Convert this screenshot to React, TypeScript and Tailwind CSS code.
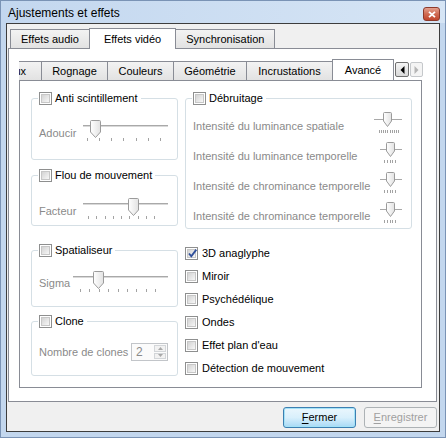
import type { ReactNode } from 'react'

function Check({ checked = false }: { checked?: boolean }) {
  return (
    <span className="relative flex h-[13px] w-[13px] shrink-0 items-center justify-center border border-[#8e8f8f] bg-white">
      <span className="h-[9px] w-[9px] border border-[#c7c7c7] bg-gradient-to-br from-[#d3d3d3] to-[#f7f7f7]" />
      {checked && (
        <svg className="absolute left-[1px] top-0" width="11" height="11" viewBox="0 0 11 11">
          <path d="M2 5.5 L4.3 8.3 L9.3 1.6" fill="none" stroke="#2f4f9a" strokeWidth="1.9" />
        </svg>
      )}
    </span>
  )
}

function Thumb({ w = 11, h = 18 }: { w?: number; h?: number }) {
  return (
    <svg width={w} height={h} viewBox={`0 0 ${w} ${h}`}>
      <defs>
        <linearGradient id="thumbfill" x1="0" y1="0" x2="1" y2="0">
          <stop offset="0" stopColor="#ffffff" />
          <stop offset="1" stopColor="#e2e2e2" />
        </linearGradient>
      </defs>
      <path
        d={`M1.5 0.5 H${w - 1.5} Q${w - 0.5} 0.5 ${w - 0.5} 1.5 V${h - 6} L${w / 2} ${h - 0.5} L0.5 ${h - 6} V1.5 Q0.5 0.5 1.5 0.5 Z`}
        fill="url(#thumbfill)"
        stroke="#9b9b9b"
      />
    </svg>
  )
}

// horizontal slider of the left groups
function Slider({ width, thumb, ticks, tickFrom, tickTo }: { width: number; thumb: number; ticks: number; tickFrom: number; tickTo: number }) {
  return (
    <div className="relative h-[22px] shrink-0" style={{ width }}>
      <div className="absolute left-0 right-0 top-[5px] h-[3px] border-y border-t-[#a9a9a9] border-b-white bg-[#d9d9d9]" />
      <div className="absolute top-0" style={{ left: thumb }}>
        <Thumb />
      </div>
      <div className="absolute top-[18px] flex justify-between" style={{ left: tickFrom, width: tickTo - tickFrom + 1 }}>
        {Array.from({ length: ticks }).map((_, i) => (
          <span key={i} className="h-[3px] w-px bg-[#a3a3a3]" />
        ))}
      </div>
    </div>
  )
}

// tiny slider of the Débruitage rows
function MiniSlider({ wide = false }: { wide?: boolean }) {
  return (
    <div className={`relative h-[21px] shrink-0 ${wide ? 'w-[28px]' : 'w-[22px]'}`}>
      <div className="absolute left-0 right-0 top-[7px] h-[2px] border-t border-[#a9a9a9] bg-white" />
      <div className={`absolute top-0 ${wide ? 'left-[9px]' : 'left-[6px]'}`}>
        <Thumb w={9} h={15} />
      </div>
      <div className={`absolute flex justify-between ${wide ? 'left-[5px] top-[18px] w-[20px]' : 'left-[4px] top-[18px] w-[12px]'}`}>
        {Array.from({ length: wide ? 10 : 5 }).map((_, i) => (
          <span key={i} className="h-[3px] w-px bg-[#a3a3a3]" />
        ))}
      </div>
    </div>
  )
}

function Group({ label, className, children }: { label: string; className: string; children: ReactNode }) {
  return (
    <fieldset className={`rounded-[3px] border border-[#d5dfe5] ${className}`}>
      <legend className="ml-[6px] flex items-center gap-[3px] pl-px pr-[3px] leading-[14px]">
        <Check />
        <span>{label}</span>
      </legend>
      {children}
    </fieldset>
  )
}

function OuterTab({ label, active = false }: { label: string; active?: boolean }) {
  return active ? (
    <div className="relative z-10 -mb-px -ml-px flex h-[21px] items-start border border-b-0 border-[#898c95] bg-white px-[14px] pt-[2px]">
      {label}
    </div>
  ) : (
    <div className="-ml-px flex h-[19px] items-center border border-b-0 border-[#898c95] bg-gradient-to-b from-[#f3f3f3] to-[#e2e2e2] px-[10px] first:ml-0">
      {label}
    </div>
  )
}

function InnerTab({ label, w, active = false }: { label: string; w: string; active?: boolean }) {
  return active ? (
    <div className={`relative z-10 -mb-px -ml-px flex h-[22px] shrink-0 items-start justify-center border border-b-0 border-[#898c95] bg-white pt-[2px] ${w}`}>
      {label}
    </div>
  ) : (
    <div className={`-ml-px flex h-[19px] shrink-0 items-center justify-center border border-b-0 border-[#898c95] bg-gradient-to-b from-[#f3f3f3] to-[#e2e2e2] ${w}`}>
      {label}
    </div>
  )
}

const noiseRows = [
  { text: 'Intensité du luminance spatiale', wide: true },
  { text: 'Intensité du luminance temporelle', wide: false },
  { text: 'Intensité de chrominance temporelle', wide: false },
  { text: 'Intensité de chrominance temporelle', wide: false },
]

const effects = [
  { text: '3D anaglyphe', checked: true },
  { text: 'Miroir' },
  { text: 'Psychédélique' },
  { text: 'Ondes' },
  { text: "Effet plan d'eau" },
  { text: 'Détection de mouvement' },
]

export default function App() {
  return (
    <div className="flex h-[438px] w-[446px] flex-col border border-[#7a93b5] bg-[#c3d7ee] font-['Liberation_Sans',Arial,sans-serif] text-[11px] text-black">
      {/* title bar */}
      <div className="flex h-[22px] shrink-0 items-start justify-between bg-gradient-to-r from-[#c3d7ef] to-[#d6e5f5] pl-[7px] pr-[5px]">
        <span className="pt-[5px] text-[12px] leading-[15px]">Ajustements et effets</span>
        <button
          type="button"
          className="mt-[6px] flex h-[14px] w-[17px] items-center justify-center rounded-[3px] border border-[#8d3a2b] bg-gradient-to-b from-[#e3a08e] via-[#cf6a52] to-[#c1452c]"
        >
          <svg width="8" height="7" viewBox="0 0 8 7">
            <path d="M1 0.8 L7 6.2 M7 0.8 L1 6.2" stroke="white" strokeWidth="1.8" />
          </svg>
        </button>
      </div>

      {/* client */}
      <div className="mx-[5px] mb-[5px] flex flex-1 flex-col border border-[#3d3d3d] bg-[#f0f0f0]">
        <div className="ml-px mr-[2px] mt-[4px] flex flex-1 flex-col">
          <div className="flex h-[20px] items-end pl-[2px]">
            <OuterTab label="Effets audio" />
            <OuterTab label="Effets vidéo" active />
            <OuterTab label="Synchronisation" />
          </div>
          <div className="flex flex-1 flex-col border border-[#898c95] bg-white pb-[13px] pl-[10px] pr-[13px] pt-[10px]">
            {/* inner tab row */}
            <div className="flex h-[21px] items-end">
              <div className="flex w-[375px] items-end overflow-hidden pl-px">
                <div className="-ml-px flex h-[19px] w-[23px] shrink-0 items-center justify-end overflow-hidden whitespace-nowrap border border-b-0 border-l-0 border-[#898c95] bg-gradient-to-b from-[#f3f3f3] to-[#e2e2e2] pr-[15px]">
                  Généraux
                </div>
                <InnerTab label="Rognage" w="w-[67px]" />
                <InnerTab label="Couleurs" w="w-[67px]" />
                <InnerTab label="Géométrie" w="w-[74px]" />
                <InnerTab label="Incrustations" w="w-[87px]" />
                <InnerTab label="Avancé" w="w-[62px]" active />
              </div>
              <div className="mb-[3px] ml-px flex gap-px">
                <div className="flex h-[15px] w-[14px] items-center justify-center rounded-[2px] border border-[#707070] bg-gradient-to-b from-[#f5f5f5] to-[#d9d9d9]">
                  <svg width="5" height="8" viewBox="0 0 5 8">
                    <path d="M4.5 0 V8 L0.5 4 Z" fill="#000" />
                  </svg>
                </div>
                <div className="flex h-[15px] w-[13px] items-center justify-center rounded-[2px] border border-[#c5c8cb] bg-[#f4f4f4]">
                  <svg width="5" height="8" viewBox="0 0 5 8">
                    <path d="M0.5 0 V8 L4.5 4 Z" fill="#b5b5b5" />
                  </svg>
                </div>
              </div>
            </div>

            {/* inner panel */}
            <div className="mr-px flex-1 border border-[#898c95] bg-white pl-[11px] pt-[10px]">
              <div className="grid grid-cols-[147px_227px] gap-x-[7px] gap-y-[14px]">
                {/* left, row 1 */}
                <div className="flex flex-col gap-[8px]">
                  <Group label="Anti scintillement" className="pb-[17px] pt-[15px]">
                    <div className="flex items-start justify-between pl-[7px] pr-[9px]">
                      <span className="pt-[6px] leading-[15px] text-[#8a8a8a]">Adoucir</span>
                      <Slider width={85} thumb={7} ticks={7} tickFrom={4} tickTo={77} />
                    </div>
                  </Group>
                  <Group label="Flou de mouvement" className="pb-[5px] pt-[16px]">
                    <div className="flex items-start justify-between pl-[7px] pr-[9px]">
                      <span className="pt-[6px] leading-[15px] text-[#8a8a8a]">Facteur</span>
                      <Slider width={85} thumb={45} ticks={9} tickFrom={5} tickTo={71} />
                    </div>
                  </Group>
                </div>

                {/* right, row 1 */}
                <Group label="Débruitage" className="pt-[7px]">
                  <div className="flex flex-col">
                    {noiseRows.map((r, i) => (
                      <div key={i} className="flex h-[30px] items-start justify-between pl-[7px] pr-[9px] last:h-[26px]">
                        <span className="whitespace-nowrap pt-[7px] leading-[15px] text-[#8a8a8a]">{r.text}</span>
                        <MiniSlider wide={r.wide} />
                      </div>
                    ))}
                  </div>
                </Group>

                {/* left, row 2 */}
                <div className="flex flex-col gap-[7px]">
                  <Group label="Spatialiseur" className="pb-[13px] pt-[14px]">
                    <div className="flex items-start justify-between pl-[7px] pr-[9px]">
                      <span className="pt-[5px] leading-[15px] text-[#8a8a8a]">Sigma</span>
                      <Slider width={95} thumb={20} ticks={9} tickFrom={7} tickTo={82} />
                    </div>
                  </Group>
                  <Group label="Clone" className="pb-[14px] pt-[15px]">
                    <div className="flex items-center justify-between pl-[7px] pr-[9px]">
                      <span className="whitespace-nowrap leading-[15px] text-[#8a8a8a]">Nombre de clones</span>
                      <div className="flex h-[18px] w-[37px] border border-[#c2c5c9] bg-[#fbfbfb]">
                        <span className="flex-1 pl-[4px] text-[12px] leading-[16px] text-[#8a8a8a]">2</span>
                        <div className="my-px mr-px flex w-[12px] flex-col gap-px">
                          <div className="flex flex-1 items-center justify-center border border-[#d3d6d9] bg-[#f2f2f2]">
                            <svg width="5" height="3" viewBox="0 0 5 3">
                              <path d="M0 3 H5 L2.5 0 Z" fill="#a8a8a8" />
                            </svg>
                          </div>
                          <div className="flex flex-1 items-center justify-center border border-[#d3d6d9] bg-[#f2f2f2]">
                            <svg width="5" height="3" viewBox="0 0 5 3">
                              <path d="M0 0 H5 L2.5 3 Z" fill="#a8a8a8" />
                            </svg>
                          </div>
                        </div>
                      </div>
                    </div>
                  </Group>
                </div>

                {/* right, row 2 */}
                <div className="-mt-px flex flex-col">
                  {effects.map((e) => (
                    <label key={e.text} className="flex h-[23px] items-center gap-[4px]">
                      <Check checked={e.checked} />
                      <span>{e.text}</span>
                    </label>
                  ))}
                </div>
              </div>
            </div>
          </div>

          {/* footer */}
          <div className="flex h-[29px] shrink-0 items-start justify-end gap-[8px] pt-[5px]">
            <button
              type="button"
              className="h-[21px] w-[73px] rounded-[3px] border border-[#3c7fb1] bg-gradient-to-b from-[#eaf6fd] via-[#d9f0fc] to-[#a7d9f5] shadow-[inset_0_0_0_1px_#a4e2f7]"
            >
              <span className="underline underline-offset-2">F</span>ermer
            </button>
            <button
              type="button"
              className="h-[21px] w-[73px] rounded-[3px] border border-[#adb2b5] bg-[#f4f4f4] text-[#a0a0a0]"
            >
              <span className="underline underline-offset-2">E</span>nregistrer
            </button>
          </div>
        </div>
      </div>
    </div>
  )
}
